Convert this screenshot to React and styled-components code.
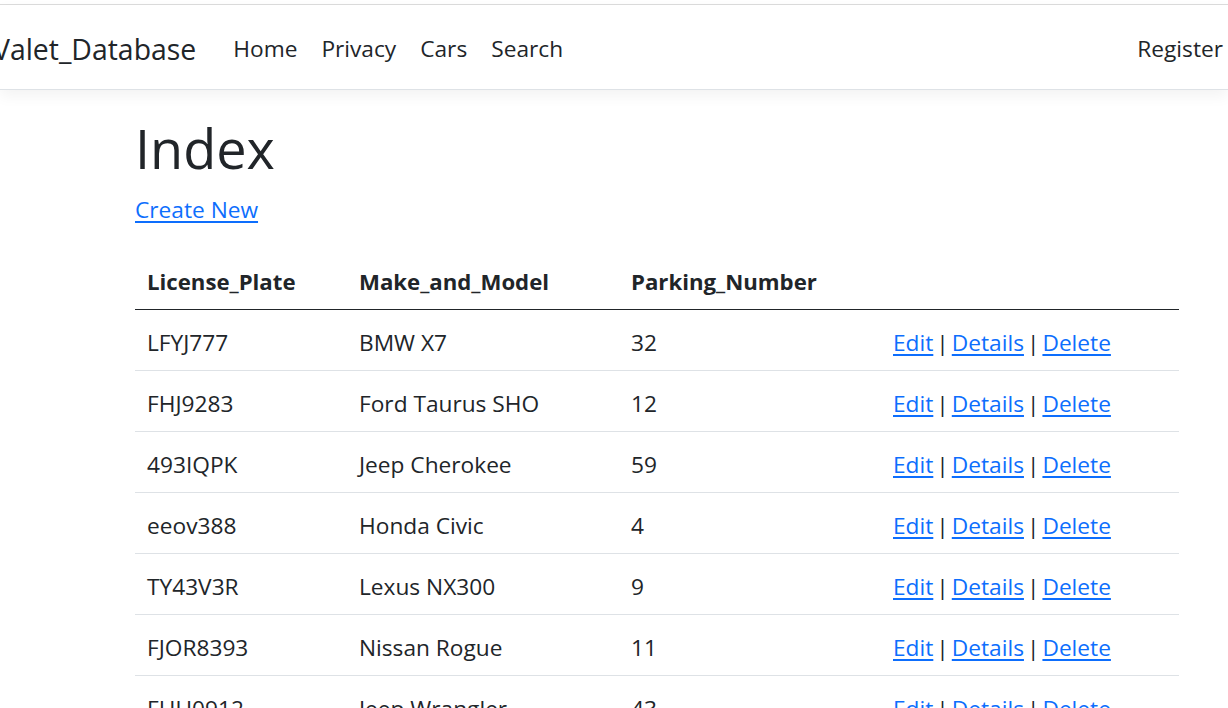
import React from "react";
import styled, { createGlobalStyle } from "styled-components";

const Global = createGlobalStyle`
  html, body { margin: 0; padding: 0; background: #fff; }
  body {
    font-family: "Open Sans", "Noto Sans", sans-serif;
    font-size: 22.7px;
    line-height: 36px;
    color: #212529;
    overflow: hidden;
  }
  * { box-sizing: border-box; }
`;

const Page = styled.div`
  width: 1228px;
  height: 708px;
  overflow: hidden;
  background: #fff;
`;

const TopLine = styled.div`
  height: 5px;
  border-bottom: 1px solid #dcdcdc;
`;

const Navbar = styled.header`
  display: flex;
  align-items: center;
  height: 85px;
  padding-top: 3px;
  border-bottom: 1px solid #dee2e6;
  box-shadow: 0 6px 14px rgba(0, 0, 0, 0.05);
  background: #fff;
  white-space: nowrap;
`;

const Brand = styled.a`
  font-size: 28.4px;
  color: #212529;
  margin-left: -7px;
  margin-right: 25px;
  text-decoration: none;
`;

const NavLink = styled.a`
  padding: 0 12px;
  color: #212529;
  text-decoration: none;
`;

const Spacer = styled.div`
  flex: 1;
`;

const RightLink = styled(NavLink)`
  padding-right: 5px;
`;

const Main = styled.main`
  margin-left: 135px;
  width: 1044px;
  padding-top: 26px;
`;

const Title = styled.h1`
  margin: 0 0 10px;
  font-size: 54px;
  font-weight: 400;
  line-height: 64px;
`;

const Para = styled.p`
  margin: 0 0 21px;
  padding-top: 2px;
`;

const Link = styled.a`
  color: #0d6efd;
  text-decoration: underline;
  text-decoration-thickness: 2px;
  text-underline-offset: 3px;
`;

const Table = styled.table`
  width: 100%;
  border-collapse: collapse;
  table-layout: fixed;
`;

const Th = styled.th`
  text-align: left;
  font-weight: 700;
  font-size: 22.2px;
  padding: 15px 12px 9px;
  border-bottom: 1px solid #212529;
  width: ${(p) => p.$w}px;
`;

const Td = styled.td`
  padding: 15px 12px 9px;
  border-bottom: 1px solid #dee2e6;
  white-space: nowrap;
`;

const Sep = styled.span`
  margin: 0 3px;
`;

const rows = [
  ["LFYJ777", "BMW X7", "32"],
  ["FHJ9283", "Ford Taurus SHO", "12"],
  ["493IQPK", "Jeep Cherokee", "59"],
  ["eeov388", "Honda Civic", "4"],
  ["TY43V3R", "Lexus NX300", "9"],
  ["FJOR8393", "Nissan Rogue", "11"],
  ["FHU0912", "Jeep Wrangler", "43"],
];

export default function App() {
  return (
    <Page>
      <Global />
      <TopLine />
      <Navbar>
        <Brand href="#">Valet_Database</Brand>
        <NavLink href="#">Home</NavLink>
        <NavLink href="#">Privacy</NavLink>
        <NavLink href="#">Cars</NavLink>
        <NavLink href="#">Search</NavLink>
        <Spacer />
        <RightLink href="#">Register</RightLink>
      </Navbar>
      <Main>
        <Title>Index</Title>
        <Para>
          <Link href="#">Create New</Link>
        </Para>
        <Table>
          <thead>
            <tr>
              <Th $w={212}>License_Plate</Th>
              <Th $w={272}>Make_and_Model</Th>
              <Th $w={262}>Parking_Number</Th>
              <Th $w={298}></Th>
            </tr>
          </thead>
          <tbody>
            {rows.map((r) => (
              <tr key={r[0]}>
                <Td>{r[0]}</Td>
                <Td>{r[1]}</Td>
                <Td>{r[2]}</Td>
                <Td>
                  <Link href="#">Edit</Link>
                  <Sep>|</Sep>
                  <Link href="#">Details</Link>
                  <Sep>|</Sep>
                  <Link href="#">Delete</Link>
                </Td>
              </tr>
            ))}
          </tbody>
        </Table>
      </Main>
    </Page>
  );
}
